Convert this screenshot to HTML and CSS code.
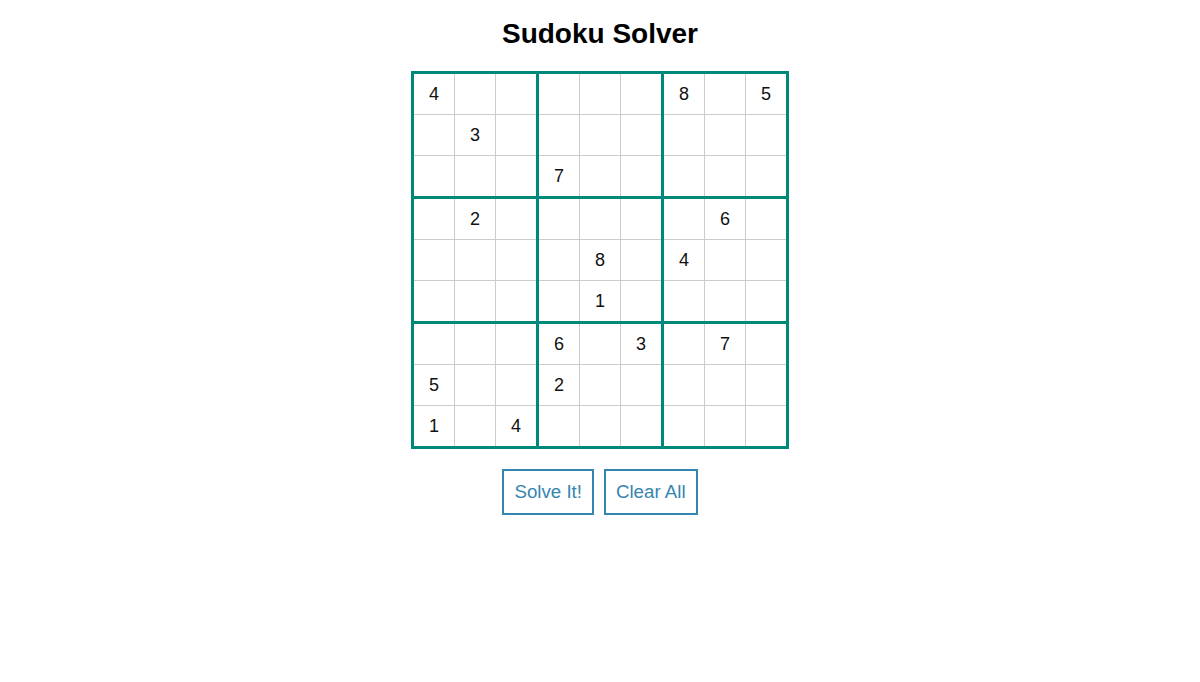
FILE: index.html
```html
<!DOCTYPE html>
<html>
<head>
<meta charset="utf-8">
<title>Sudoku Solver</title>
<link rel="stylesheet" href="styles.css">
</head>
<body>
<h1 class="title">Sudoku Solver</h1>
<table class="board">
<tr><td>4</td><td></td><td></td><td></td><td></td><td></td><td>8</td><td></td><td>5</td></tr>
<tr><td></td><td>3</td><td></td><td></td><td></td><td></td><td></td><td></td><td></td></tr>
<tr><td></td><td></td><td></td><td>7</td><td></td><td></td><td></td><td></td><td></td></tr>
<tr><td></td><td>2</td><td></td><td></td><td></td><td></td><td></td><td>6</td><td></td></tr>
<tr><td></td><td></td><td></td><td></td><td>8</td><td></td><td>4</td><td></td><td></td></tr>
<tr><td></td><td></td><td></td><td></td><td>1</td><td></td><td></td><td></td><td></td></tr>
<tr><td></td><td></td><td></td><td>6</td><td></td><td>3</td><td></td><td>7</td><td></td></tr>
<tr><td>5</td><td></td><td></td><td>2</td><td></td><td></td><td></td><td></td><td></td></tr>
<tr><td>1</td><td></td><td>4</td><td></td><td></td><td></td><td></td><td></td><td></td></tr>
</table>
<div class="actions">
<button class="btn">Solve It!</button>
<button class="btn">Clear All</button>
</div>
</body>
</html>
```
FILE: styles.css
```css
html, body {
  margin: 0;
  padding: 0;
  background: #fff;
  font-family: "Liberation Sans", Arial, sans-serif;
}
.title {
  font-size: 28px;
  font-weight: bold;
  line-height: 32px;
  text-align: center;
  margin: 18px 0 21px;
  color: #000;
}
.board {
  border-collapse: collapse;
  border: 3px solid #00897b;
  margin: 0 auto;
}
.board td {
  width: 40px;
  height: 40px;
  padding: 0;
  border: 1px solid #cccccc;
  text-align: center;
  vertical-align: middle;
  font-size: 18px;
  color: #111;
}
.board td:nth-child(3n) {
  border-right: 3px solid #00897b;
}
.board tr:nth-child(3n) td {
  border-bottom: 3px solid #00897b;
}
.actions {
  display: flex;
  justify-content: center;
  gap: 10px;
  margin-top: 20px;
}
.btn {
  font-family: "Liberation Sans", Arial, sans-serif;
  font-size: 18.7px;
  line-height: 22px;
  padding: 10px 10px;
  background: #fff;
  color: #3585b1;
  border: 2px solid #3585b1;
  border-radius: 0;
  cursor: pointer;
}
```
